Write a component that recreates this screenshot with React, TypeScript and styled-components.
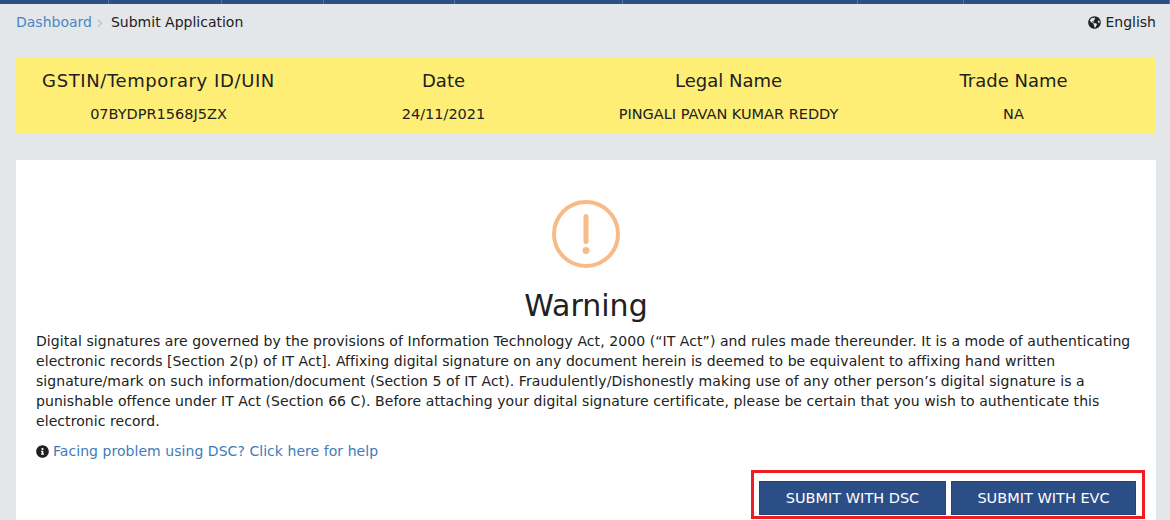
import styled, { createGlobalStyle } from 'styled-components'
import { FaGlobeAmericas, FaInfoCircle } from 'react-icons/fa'

const GlobalStyle = createGlobalStyle`
  html, body {
    margin: 0;
    padding: 0;
    background: #e4e7ea;
    font-family: "DejaVu Sans", Verdana, sans-serif;
    color: #212121;
    overflow: hidden;
  }
  * { box-sizing: border-box; }
`

const navWidths = [109, 113, 102, 131, 168, 235, 106, 206]
const headers = [
  { label: 'GSTIN/Temporary ID/UIN', value: '07BYDPR1568J5ZX', spacing: 0.6 },
  { label: 'Date', value: '24/11/2021', spacing: 0 },
  { label: 'Legal Name', value: 'PINGALI PAVAN KUMAR REDDY', spacing: 0 },
  { label: 'Trade Name', value: 'NA', spacing: 0 },
]

export default function App() {
  return (
    <Page>
      <GlobalStyle />
      <TopNav>
        {navWidths.map((w, i) => (
          <NavItem key={i} style={{ width: w }} />
        ))}
      </TopNav>
      <Crumbs>
        <CrumbTrail>
          <CrumbLink>Dashboard</CrumbLink>
          <CrumbSep>›</CrumbSep>
          <CrumbCurrent>Submit Application</CrumbCurrent>
        </CrumbTrail>
        <Language>
          <FaGlobeAmericas size={13} />
          English
        </Language>
      </Crumbs>
      <InfoBar>
        {headers.map((h) => (
          <InfoCol key={h.label}>
            <InfoLabel $spacing={h.spacing}>{h.label}</InfoLabel>
            <InfoValue>{h.value}</InfoValue>
          </InfoCol>
        ))}
      </InfoBar>
      <Card>
        <WarnIcon viewBox="0 0 68 68" aria-hidden="true">
          <circle cx="34" cy="34" r="32" fill="none" stroke="#f8bb86" strokeWidth="4" />
          <rect x="31.5" y="14" width="5" height="30" rx="2.5" fill="#f8bb86" />
          <circle cx="34" cy="50.5" r="3.5" fill="#f8bb86" />
        </WarnIcon>
        <Title>Warning</Title>
        <Body>
          Digital signatures are governed by the provisions of Information Technology Act, 2000 (“IT Act”) and rules made thereunder. It is a mode of authenticating
          electronic records [Section 2(p) of IT Act]. Affixing digital signature on any document herein is deemed to be equivalent to affixing hand written
          signature/mark on such information/document (Section 5 of IT Act). Fraudulently/Dishonestly making use of any other person’s digital signature is a
          punishable offence under IT Act (Section 66 C). Before attaching your digital signature certificate, please be certain that you wish to authenticate this
          electronic record.
        </Body>
        <Help>
          <FaInfoCircle size={13} />
          <HelpLink>Facing problem using DSC? Click here for help</HelpLink>
        </Help>
        <Actions>
          <Highlight>
            <SubmitButton $width={187}>SUBMIT WITH DSC</SubmitButton>
            <SubmitButton $width={185}>SUBMIT WITH EVC</SubmitButton>
          </Highlight>
        </Actions>
      </Card>
    </Page>
  )
}

const Page = styled.div`
  width: 1170px;
  height: 520px;
  overflow: hidden;
  padding: 0 14px 0 16px;
`

const TopNav = styled.div`
  display: flex;
  height: 4px;
  margin: 0 -14px 0 -16px;
  background: #2c4e86;
`

const NavItem = styled.div`
  height: 100%;
  border-right: 1px solid #5a7299;
`

const Crumbs = styled.div`
  display: flex;
  justify-content: space-between;
  align-items: center;
  height: 36px;
  font-size: 14px;
`

const CrumbTrail = styled.div`
  display: flex;
  align-items: center;
`

const CrumbLink = styled.span`
  color: #4a85c5;
`

const CrumbSep = styled.span`
  width: 19px;
  padding-left: 4px;
  color: #c4c4c4;
  font-size: 19px;
  line-height: 1;
`

const CrumbCurrent = styled.span`
  color: #212121;
`

const Language = styled.div`
  display: flex;
  align-items: center;
  gap: 4px;
`

const InfoBar = styled.div`
  display: grid;
  grid-template-columns: repeat(4, 285px);
  height: 75px;
  margin-top: 18px;
  background: #ffee75;
`

const InfoCol = styled.div`
  display: flex;
  flex-direction: column;
  align-items: center;
  padding-top: 12px;
`

const InfoLabel = styled.div<{ $spacing: number }>`
  font-size: 18px;
  line-height: 22px;
  letter-spacing: ${(p) => p.$spacing}px;
`

const InfoValue = styled.div`
  margin-top: 13px;
  font-size: 14.5px;
  line-height: 18px;
`

const Card = styled.div`
  display: flex;
  flex-direction: column;
  align-items: center;
  height: 360px;
  margin-top: 27px;
  padding: 40px 20px 0;
  background: #fff;
`

const WarnIcon = styled.svg`
  width: 68px;
  height: 68px;
  flex-shrink: 0;
`

const Title = styled.h2`
  margin: 18px 0 0;
  font-size: 30px;
  font-weight: 400;
  line-height: 40px;
`

const Body = styled.p`
  align-self: stretch;
  margin: 5px 0 0;
  font-size: 14px;
  line-height: 20px;
  letter-spacing: 0.07px;
`

const Help = styled.div`
  align-self: stretch;
  display: flex;
  align-items: center;
  gap: 4px;
  margin-top: 10px;
  font-size: 14px;
  line-height: 20px;
  letter-spacing: 0.05px;
`

const HelpLink = styled.span`
  color: #3f7cb8;
`

const Actions = styled.div`
  align-self: stretch;
  display: flex;
  justify-content: flex-end;
  margin: 9px -9px 0 0;
`

const Highlight = styled.div`
  display: flex;
  gap: 5px;
  height: 49px;
  padding: 8px 6px 1px 5px;
  border: 3px solid #ee1c25;
`

const SubmitButton = styled.button<{ $width: number }>`
  width: ${(p) => p.$width}px;
  height: 34px;
  padding: 0;
  border: 1px solid #25447a;
  background: #2c4e86;
  color: #fff;
  font-family: inherit;
  font-size: 14.5px;
`
